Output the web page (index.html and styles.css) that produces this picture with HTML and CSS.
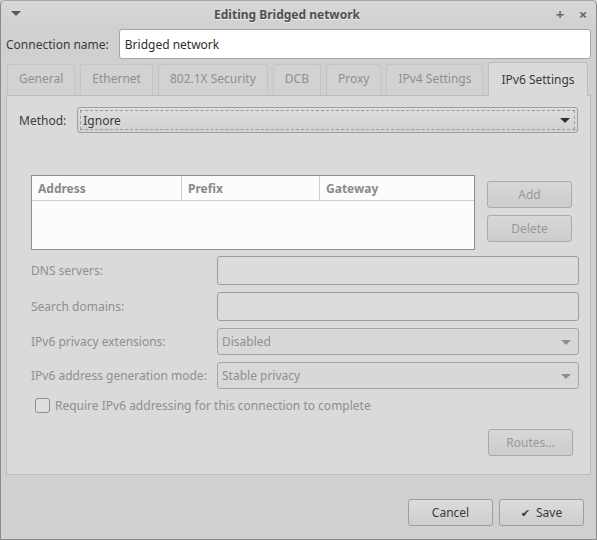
FILE: index.html
```html
<!DOCTYPE html>
<html>
<head>
<meta charset="utf-8">
<link rel="stylesheet" href="styles.css">
</head>
<body>
<div class="window">
  <div class="titlebar">
    <span class="menu-arrow"></span>
    <span class="title">Editing Bridged network</span>
    <span class="tb-btns"><span class="tb-btn">+</span><span class="tb-btn">×</span></span>
  </div>
  <div class="content">
    <div class="name-row">
      <span class="label">Connection name:</span>
      <div class="entry active-entry">Bridged network</div>
    </div>
    <div class="notebook">
      <div class="tabs">
        <div class="tab">General</div>
        <div class="tab">Ethernet</div>
        <div class="tab">802.1X Security</div>
        <div class="tab">DCB</div>
        <div class="tab">Proxy</div>
        <div class="tab">IPv4 Settings</div>
        <div class="tab current">IPv6 Settings</div>
      </div>
      <div class="page">
        <div class="method-row">
          <span class="label">Method:</span>
          <div class="combo focus"><span class="combo-inner">Ignore</span><span class="arrow"></span></div>
        </div>
        <div class="section">
          <div class="addr-row">
            <div class="table">
              <div class="thead">
                <div class="th c1">Address</div>
                <div class="th c2">Prefix</div>
                <div class="th c3">Gateway</div>
              </div>
            </div>
            <div class="side-btns">
              <div class="btn disabled">Add</div>
              <div class="btn disabled">Delete</div>
            </div>
          </div>
          <div class="form">
            <span class="label dim">DNS servers:</span>
            <div class="entry dis tall"></div>
            <span class="label dim">Search domains:</span>
            <div class="entry dis tall"></div>
            <span class="label dim">IPv6 privacy extensions:</span>
            <div class="combo dis"><span class="combo-inner">Disabled</span><span class="arrow"></span></div>
            <span class="label dim">IPv6 address generation mode:</span>
            <div class="combo dis"><span class="combo-inner">Stable privacy</span><span class="arrow"></span></div>
          </div>
          <div class="check-row">
            <span class="checkbox"></span>
            <span class="label dim">Require IPv6 addressing for this connection to complete</span>
          </div>
          <div class="routes-row">
            <div class="btn disabled">Routes…</div>
          </div>
        </div>
      </div>
    </div>
  </div>
  <div class="actions">
    <div class="btn">Cancel</div>
    <div class="btn"><span class="check">&#10004;</span>Save</div>
  </div>
</div>
</body>
</html>
```
FILE: styles.css
```css
html, body {
  margin: 0;
  padding: 0;
  background: #d0d0d0;
}
body {
  font-family: "Noto Sans", "DejaVu Sans", sans-serif;
  font-size: 12px;
  color: #3b3b3b;
}
.label, .tab, .th, .btn {
  white-space: nowrap;
}
.window {
  box-sizing: border-box;
  width: 597px;
  height: 540px;
  background: #d0d0d0;
  border: 1px solid #8a8a8a;
  border-top-color: #a8a8a8;
  border-radius: 5px 5px 0 0;
  display: flex;
  flex-direction: column;
}
.titlebar {
  height: 26px;
  display: flex;
  align-items: center;
  background: linear-gradient(#d8d8d8, #d0d0d0);
  border-radius: 5px 5px 0 0;
}
.menu-arrow {
  margin-left: 10px;
  width: 0;
  height: 0;
  border-left: 5px solid transparent;
  border-right: 5px solid transparent;
  border-top: 5px solid #5a5a5a;
  margin-top: -1px;
}
.title {
  flex: 1;
  text-align: center;
  font-weight: bold;
  color: #505050;
  text-shadow: 0 1px 0 #eeeeee;
  margin-left: 0;
  font-size: 12px;
}
.tb-btns {
  display: flex;
  gap: 9px;
  margin-right: 6px;
}
.tb-btn {
  color: #6a6a6a;
  font-size: 15px;
  font-weight: bold;
  width: 14px;
  text-align: center;
}
.content {
  padding: 2px 5px 0 5px;
}
.name-row {
  display: flex;
  align-items: center;
  gap: 10px;
}
.entry {
  box-sizing: border-box;
  height: 30px;
  border: 1px solid #a4a4a4;
  border-radius: 3px;
  padding: 0 5px;
  display: flex;
  align-items: center;
}
.active-entry {
  flex: 1;
  background: #ffffff;
  color: #2e2e2e;
}
.notebook {
  margin-top: 3px;
}
.tabs {
  display: flex;
  gap: 5px;
  align-items: flex-end;
  padding-left: 1px;
  height: 33px;
}
.tab {
  box-sizing: border-box;
  height: 31px;
  padding: 0 11px 3px 11px;
  display: flex;
  align-items: center;
  color: #8f8f8f;
  background: #d2d2d2;
  border: 1px solid #c4c4c4;
  border-bottom: none;
  border-radius: 3px 3px 0 0;
}
.tab.current {
  height: 34px;
  margin-bottom: -1px;
  background: #dadada;
  border-color: #bdbdbd;
  color: #3b3b3b;
  padding: 0 12px 1px 12px;
  position: relative;
  z-index: 1;
}
.page {
  box-sizing: border-box;
  height: 380px;
  background: #dadada;
  border: 1px solid #bcbcbc;
  padding: 11px 12px 0 12px;
}
.method-row {
  display: flex;
  align-items: center;
  gap: 11px;
}
.combo {
  box-sizing: border-box;
  flex: 1;
  height: 26px;
  border: 1px solid #a0a0a0;
  border-radius: 3px;
  background: linear-gradient(#dedede, #d2d2d2);
  display: flex;
  align-items: center;
  position: relative;
  padding: 2px;
}
.combo-inner {
  flex: 1;
  height: 100%;
  display: flex;
  align-items: center;
  padding-left: 2px;
}
.combo.focus .combo-inner {
  outline: 1px dashed #9a9a9a;
  outline-offset: -1px;
  padding-left: 3px;
}
.arrow {
  position: absolute;
  right: 7px;
  top: 10px;
  width: 0;
  height: 0;
  border-left: 5px solid transparent;
  border-right: 5px solid transparent;
  border-top: 5px solid #303030;
}
.section {
  margin: 42px -1px 0 12px;
}
.addr-row {
  display: flex;
  gap: 12px;
  align-items: flex-start;
}
.table {
  box-sizing: border-box;
  width: 444px;
  height: 75px;
  border: 1px solid #8c8c8c;
  background: #fcfcfc;
}
.thead {
  display: flex;
  height: 24px;
  border-bottom: 1px solid #cdcdcd;
}
.th {
  box-sizing: border-box;
  font-weight: bold;
  color: #8a8a8a;
  padding-left: 6px;
  display: flex;
  align-items: center;
  border-right: 1px solid #cdcdcd;
}
.c1 { width: 150px; }
.c2 { width: 138px; }
.c3 { flex: 1; border-right: none; }
.side-btns {
  display: flex;
  flex-direction: column;
  gap: 7px;
  padding-top: 6px;
  margin-right: 6px;
}
.btn {
  box-sizing: border-box;
  width: 85px;
  height: 27px;
  border: 1px solid #9e9e9e;
  border-radius: 3px;
  background: linear-gradient(#dcdcdc, #cecece);
  display: flex;
  align-items: center;
  justify-content: center;
  color: #3b3b3b;
}
.btn.disabled {
  color: #999999;
  border-color: #aaaaaa;
  background: linear-gradient(#d8d8d8, #cccccc);
}
.form {
  display: grid;
  grid-template-columns: 186px 1fr;
  row-gap: 7px;
  margin-top: 6px;
  align-items: center;
}
.label.dim {
  color: #8f8f8f;
}
.entry.dis {
  background: #dcdcdc;
  border-color: #9c9c9c;
  height: 29px;
}
.combo.dis {
  height: 27px;
  color: #8f8f8f;
  background: #d8d8d8;
  border-color: #a6a6a6;
}
.combo.dis .arrow {
  border-top-color: #8f8f8f;
  top: 11px;
}
.check-row {
  display: flex;
  align-items: center;
  gap: 5px;
  margin-top: 8px;
  padding-left: 4px;
}
.checkbox {
  box-sizing: border-box;
  width: 15px;
  height: 15px;
  border: 1px solid #8f8f8f;
  border-radius: 3px;
  background: #dedede;
}
.routes-row {
  display: flex;
  justify-content: flex-end;
  margin-top: 15px;
  padding-right: 6px;
}
.actions {
  display: flex;
  justify-content: flex-end;
  gap: 6px;
  margin-top: 24px;
  padding-right: 12px;
}
.check {
  font-size: 11px;
  margin-right: 6px;
}
```
